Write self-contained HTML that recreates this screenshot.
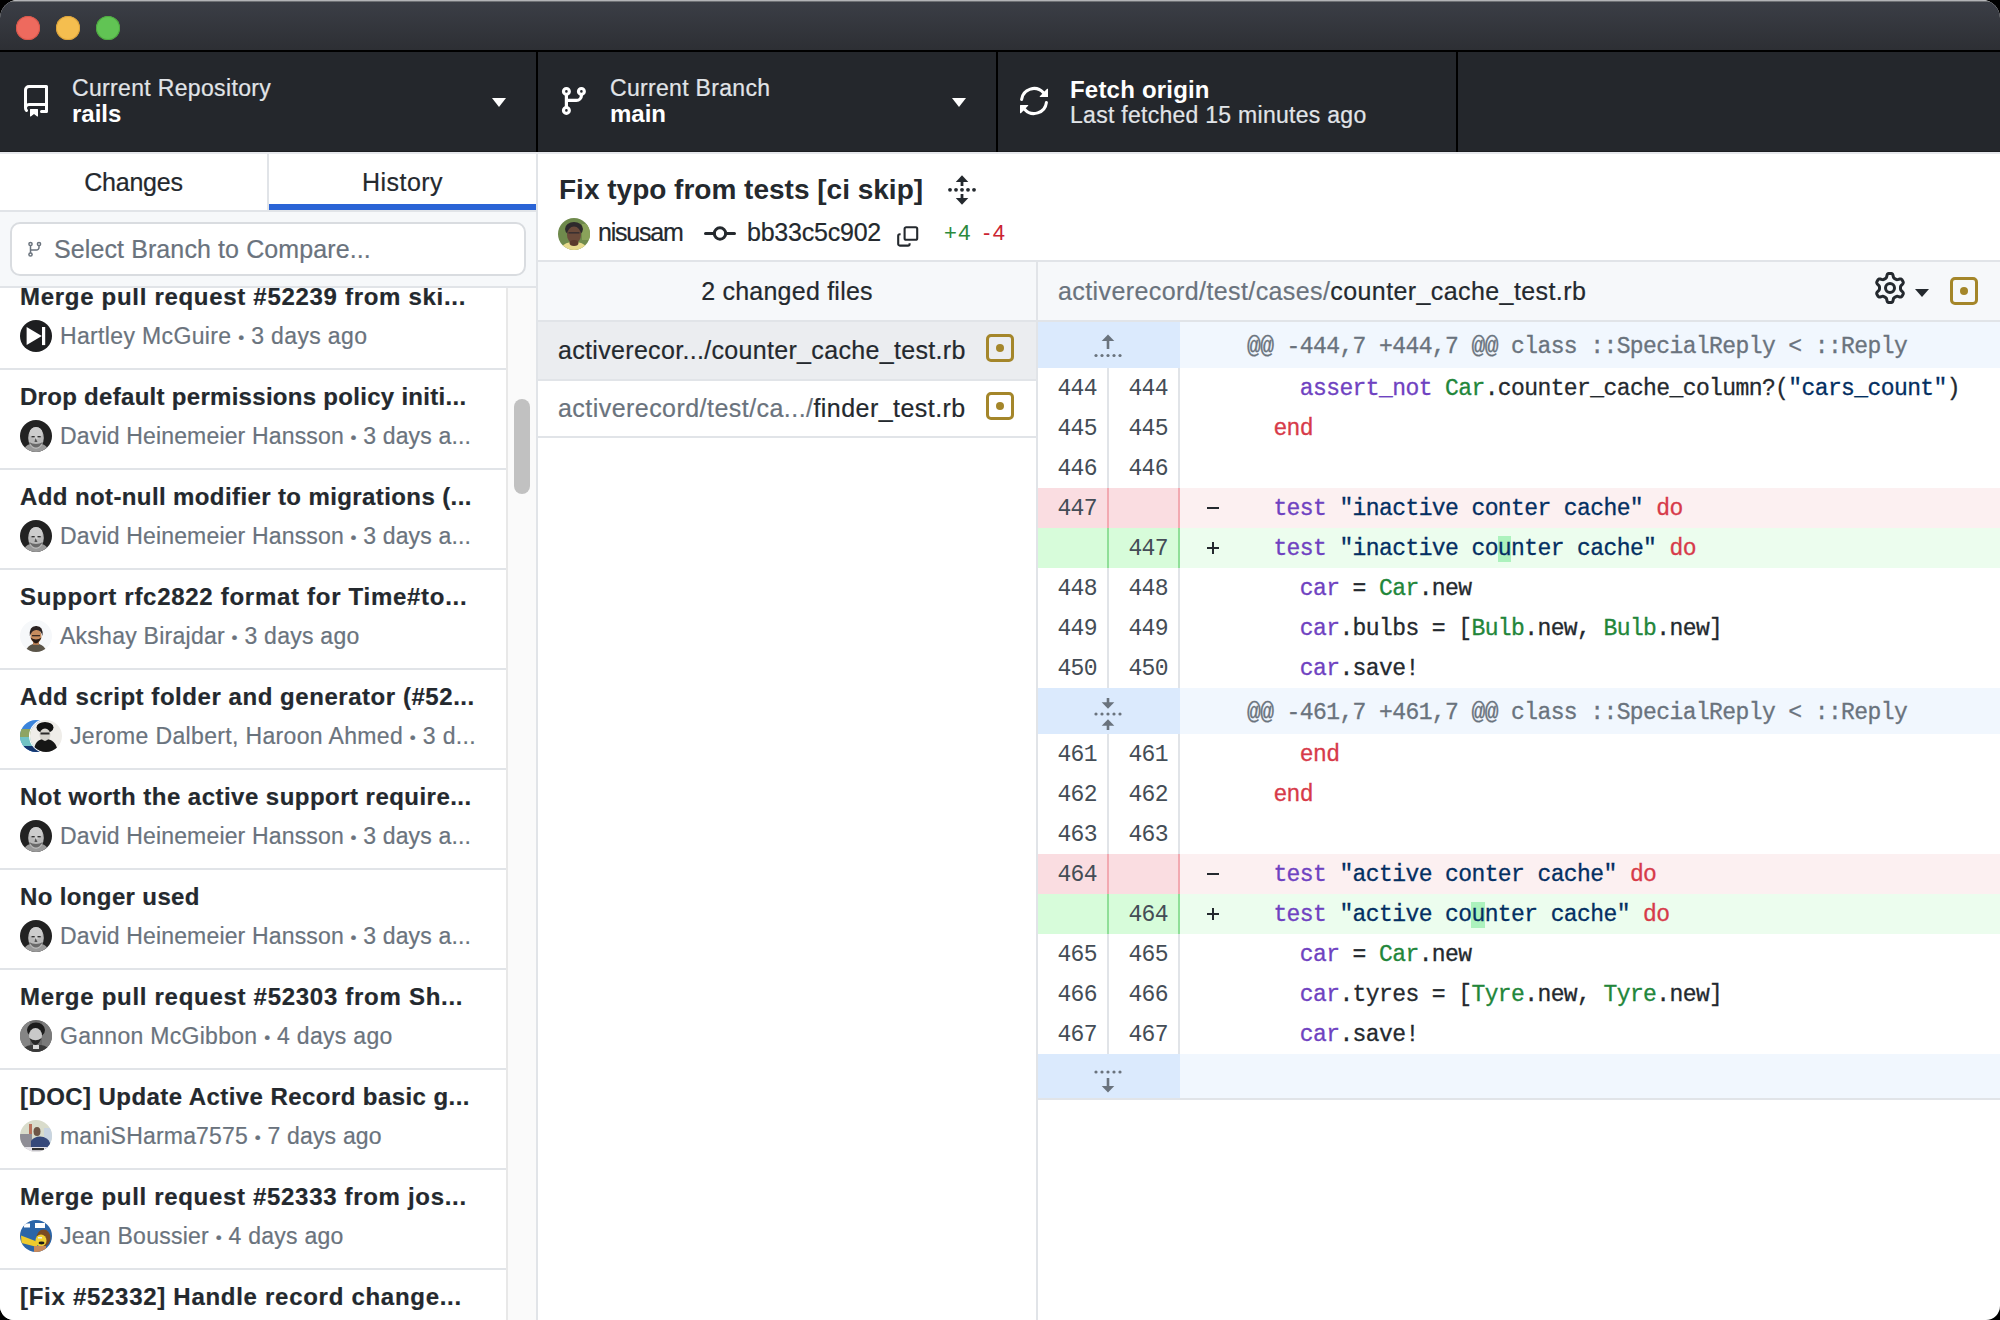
<!DOCTYPE html>
<html><head><meta charset="utf-8">
<style>
*{margin:0;padding:0;box-sizing:border-box}
html,body{width:2000px;height:1320px;overflow:hidden;background:#000}
body{font-family:"Liberation Sans",sans-serif;position:relative}
.a{position:absolute;white-space:nowrap}
#win{position:absolute;left:0;top:0;width:2000px;height:1320px;background:#fff;border-radius:18px 18px 14px 14px;overflow:hidden}
#title{position:absolute;left:0;top:0;width:2000px;height:50px;background:linear-gradient(#b2b3b6 0,#b2b3b6 1px,#6e7074 1px,#6e7074 2px,#3b3e46 2px,#2d2f34 50px)}
.tl{position:absolute;top:16px;width:24px;height:24px;border-radius:50%}
#tbline{position:absolute;left:0;top:50px;width:2000px;height:2px;background:#000}
#toolbar{position:absolute;left:0;top:52px;width:2000px;height:100px;background:#24272c}
.vdiv{position:absolute;top:52px;width:2px;height:100px;background:#000}
.tlab{font-size:22px;color:#e1e4e8;-webkit-text-stroke:0.2px currentColor}
.tval{font-size:24px;font-weight:bold;color:#fff}
.caret{position:absolute;width:0;height:0;border-left:7.5px solid transparent;border-right:7.5px solid transparent;border-top:9px solid #fff}
.t24{font-size:24px;color:#24292e;-webkit-text-stroke:0.2px currentColor}
.bold{font-weight:bold}
.gray{color:#6a737d;-webkit-text-stroke:0.2px currentColor}
.bul{font-size:17px;position:relative;top:-1px}
.sep{position:absolute;left:0;width:506px;height:2px;background:#e1e4e8}
.av{position:absolute;width:32px;height:32px;border-radius:50%;overflow:hidden}
.mono{font-family:"Liberation Mono",monospace;font-size:23px;letter-spacing:-0.6px;white-space:pre;-webkit-text-stroke:0.3px currentColor}
.row{position:absolute;left:1038px;width:962px;height:40px}
.g1{position:absolute;left:0;top:0;width:69px;height:100%;}
.g2{position:absolute;left:71px;top:0;width:69px;height:100%;}
.ln{position:absolute;right:11px;font-family:"Liberation Mono",monospace;font-size:23px;letter-spacing:-0.6px;color:#444d56;top:0;line-height:40px}
.kw{color:#d73a49}.fn{color:#6f42c1}.cl{color:#22863a}.st{color:#032f62}.tx{color:#24292e}
</style></head><body>
<div id="win">
  <div id="title">
    <div class="tl" style="left:16px;top:16px;background:#ee6a5e;box-shadow:inset 0 0 0 1px #d9574b;"></div>
    <div class="tl" style="left:56px;top:16px;background:#f5be4f;box-shadow:inset 0 0 0 1px #dca33a;"></div>
    <div class="tl" style="left:96px;top:16px;background:#61c454;box-shadow:inset 0 0 0 1px #4ea940;"></div>
  </div>
  <div id="tbline"></div>
  <div id="toolbar"></div><div class="a" style="left:0;top:151px;width:2000px;height:1px;background:#1b1d21"></div><div class="a" style="left:0;top:152px;width:2000px;height:2px;background:#e6e8ec;z-index:1"></div>
  <div class="vdiv" style="left:536px"></div>
  <div class="vdiv" style="left:996px"></div>
  <div class="vdiv" style="left:1456px"></div>

  <!-- repo icon -->
  <svg class="a" style="left:24px;top:85px" width="24" height="32" viewBox="2 0 12 16"><path fill="#fff" d="M2 2.5A2.5 2.5 0 0 1 4.5 0h8.75a.75.75 0 0 1 .75.75v12.5a.75.75 0 0 1-.75.75h-2.5a.75.75 0 0 1 0-1.5h1.75v-2h-8a1 1 0 0 0-.714 1.7.75.75 0 1 1-1.072 1.05A2.495 2.495 0 0 1 2 11.5Zm10.5-1h-8a1 1 0 0 0-1 1v6.708A2.486 2.486 0 0 1 4.5 9h8ZM5 12.25a.25.25 0 0 1 .25-.25h3.5a.25.25 0 0 1 .25.25v3.25a.25.25 0 0 1-.4.2l-1.45-1.087a.249.249 0 0 0-.3 0L5.4 15.7a.25.25 0 0 1-.4-.2Z"/></svg>
  <div id="t_repo" class="a tlab" style="left:72px;top:75px;font-size:23px;letter-spacing:0.338px">Current Repository</div>
  <div class="a tval" style="left:72px;top:100px">rails</div>
  <div class="caret" style="left:492px;top:98px"></div>
  <!-- branch icon -->
  <svg class="a" style="left:558px;top:83px" width="32" height="32" viewBox="0 0 32 32"><g fill="none" stroke="#fff" stroke-width="3.2"><circle cx="8.4" cy="8.4" r="2.9"/><circle cx="23.4" cy="8.4" r="2.9"/><circle cx="8.4" cy="27.4" r="2.9"/><path d="M8.4 11.3V24.5M8.4 17.4H18.4a5 5 0 0 0 5-5V11.3"/></g></svg>
  <div id="t_branch" class="a tlab" style="left:610px;top:75px;font-size:23px;letter-spacing:0.316px">Current Branch</div>
  <div class="a tval" style="left:610px;top:100px">main</div>
  <div class="caret" style="left:952px;top:98px"></div>
  <!-- sync icon -->
  <svg class="a" style="left:1018px;top:85px;transform:scaleX(-1)" width="32" height="32" viewBox="0 0 16 16"><path fill="#fff" d="M1.705 8.005a.75.75 0 0 1 .834.656 5.5 5.5 0 0 0 9.592 2.97l-1.204-1.204a.25.25 0 0 1 .177-.427h3.646a.25.25 0 0 1 .25.25v3.646a.25.25 0 0 1-.427.177l-1.38-1.38A7.002 7.002 0 0 1 1.05 8.84a.75.75 0 0 1 .656-.834ZM8 2.5a5.487 5.487 0 0 0-4.131 1.869l1.204 1.204A.25.25 0 0 1 4.896 6H1.25A.25.25 0 0 1 1 5.75V2.104a.25.25 0 0 1 .427-.177l1.38 1.38A7.002 7.002 0 0 1 14.95 7.16a.75.75 0 0 1-1.49.178A5.5 5.5 0 0 0 8 2.5Z"/></svg>
  <div class="a tval" style="left:1070px;top:76px;letter-spacing:0.2px">Fetch origin</div>
  <div id="t_last" class="a tlab" style="left:1070px;top:102px;font-size:23px;letter-spacing:0.277px">Last fetched 15 minutes ago</div>
  <!-- SECTION TOOLBAR -->

  <!-- tabs -->
  <div class="a" style="left:0;top:152px;width:536px;height:58px;background:#fff"></div>
  <div class="a" style="left:267px;top:152px;width:2px;height:58px;background:#e1e4e8"></div>
  <div id="t_changes" class="a t24" style="left:0;top:168px;width:267px;text-align:center;font-size:25px;letter-spacing:-0.200px">Changes</div>
  <div id="t_history" class="a t24" style="left:269px;top:168px;width:267px;text-align:center;font-size:25px;letter-spacing:0.467px">History</div>
  <div class="a" style="left:269px;top:204px;width:267px;height:6px;background:#2a64d6"></div>
  <div class="a" style="left:0;top:210px;width:536px;height:2px;background:#e1e4e8"></div>
  <!-- filter -->
  <div class="a" style="left:0;top:212px;width:536px;height:74px;background:#f6f8fa"></div>
  <div class="a" style="left:0;top:286px;width:536px;height:2px;background:#e1e4e8"></div>
  <div class="a" style="left:10px;top:222px;width:516px;height:54px;background:#fff;border:2px solid #d9dce0;border-radius:10px"></div>
  <svg class="a" style="left:26px;top:241px" width="16" height="16" viewBox="0 0 16 16"><g fill="none" stroke="#6a737d" stroke-width="1.5"><circle cx="4.5" cy="3" r="1.6"/><circle cx="13" cy="3" r="1.6"/><circle cx="4.5" cy="13.5" r="1.6"/><path d="M4.5 4.6V11.9M4.5 9H10.5a2.5 2.5 0 0 0 2.5-2.5V4.6"/></g></svg>
  <div id="t_select" class="a t24 gray" style="left:54px;top:235px;font-size:25px;letter-spacing:0.104px">Select Branch to Compare...</div>
  <!-- commit list -->
  <div class="a" id="clist" style="left:0;top:288px;width:506px;height:1032px;overflow:hidden;background:#fff">
    <div id="ct0" class="a t24 bold" style="left:20px;top:-5px;letter-spacing:0.700px">Merge pull request #52239 from ski...</div>
    <div class="av" style="left:20px;top:32px"><svg width="32" height="32" viewBox="0 0 32 32"><rect width="32" height="32" fill="#1d1e20"/><path fill="#fff" d="M6.6 7L21.8 16L6.6 25.1Z"/><rect x="22" y="7" width="3.2" height="18.1" fill="#fff"/></svg></div>
    <div id="au0" class="a gray" style="left:60px;top:35px;font-size:23px;letter-spacing:0.352px">Hartley McGuire <span class="bul">•</span> 3 days ago</div>
    <div class="sep" style="top:80px"></div>
    <div id="ct1" class="a t24 bold" style="left:20px;top:95px;letter-spacing:0.292px">Drop default permissions policy initi...</div>
    <div class="av" style="left:20px;top:132px"><svg width="32" height="32" viewBox="0 0 32 32"><rect width="32" height="32" fill="#222"/><path d="M3 32Q5 25 10 24L22 24Q27 25 29 32Z" fill="#9a9a9a"/><ellipse cx="16" cy="18" rx="7.8" ry="11" fill="#b9b9b9"/><ellipse cx="16" cy="13" rx="6.5" ry="6" fill="#cdcdcd"/><rect x="11.5" y="16" width="3.2" height="1.4" fill="#333"/><rect x="17.5" y="16" width="3.2" height="1.4" fill="#333"/><path d="M15.5 18L14.5 22H17.5Z" fill="#555"/><path d="M9 22Q16 33 23 22Q16 26 9 22Z" fill="#6a6a6a"/></svg></div>
    <div id="au1" class="a gray" style="left:60px;top:135px;font-size:23px;letter-spacing:0.165px">David Heinemeier Hansson <span class="bul">•</span> 3 days a...</div>
    <div class="sep" style="top:180px"></div>
    <div id="ct2" class="a t24 bold" style="left:20px;top:195px;letter-spacing:0.395px">Add not-null modifier to migrations (...</div>
    <div class="av" style="left:20px;top:232px"><svg width="32" height="32" viewBox="0 0 32 32"><rect width="32" height="32" fill="#222"/><path d="M3 32Q5 25 10 24L22 24Q27 25 29 32Z" fill="#9a9a9a"/><ellipse cx="16" cy="18" rx="7.8" ry="11" fill="#b9b9b9"/><ellipse cx="16" cy="13" rx="6.5" ry="6" fill="#cdcdcd"/><rect x="11.5" y="16" width="3.2" height="1.4" fill="#333"/><rect x="17.5" y="16" width="3.2" height="1.4" fill="#333"/><path d="M15.5 18L14.5 22H17.5Z" fill="#555"/><path d="M9 22Q16 33 23 22Q16 26 9 22Z" fill="#6a6a6a"/></svg></div>
    <div id="au2" class="a gray" style="left:60px;top:235px;font-size:23px;letter-spacing:0.165px">David Heinemeier Hansson <span class="bul">•</span> 3 days a...</div>
    <div class="sep" style="top:280px"></div>
    <div id="ct3" class="a t24 bold" style="left:20px;top:295px;letter-spacing:0.711px">Support rfc2822 format for Time#to...</div>
    <div class="av" style="left:20px;top:332px"><svg width="32" height="32" viewBox="0 0 32 32"><rect width="32" height="32" fill="#f6f8fa"/><path d="M5 32Q8 25 13 24H19Q24 25 27 32Z" fill="#5b5549"/><rect x="13" y="20" width="6" height="5" fill="#b07a52"/><ellipse cx="16" cy="16" rx="5.5" ry="7" fill="#c68c5e"/><path d="M10.5 17.5Q16 29 21.5 17.5Q16 21.5 10.5 17.5Z" fill="#2a1d17"/><path d="M9.8 16Q9 5.5 16.5 6Q23.5 6 22.5 16Q21 9.5 16 10Q12 10 9.8 16Z" fill="#2a2222"/><rect x="12" y="15" width="8" height="1.3" fill="#3a2a22"/></svg></div>
    <div id="au3" class="a gray" style="left:60px;top:335px;font-size:23px;letter-spacing:0.256px">Akshay Birajdar <span class="bul">•</span> 3 days ago</div>
    <div class="sep" style="top:380px"></div>
    <div id="ct4" class="a t24 bold" style="left:20px;top:395px;letter-spacing:0.548px">Add script folder and generator (#52...</div>
    <div class="av" style="left:20px;top:432px"><svg width="32" height="32" viewBox="0 0 32 32"><rect width="32" height="32" fill="#3a84dc"/><rect y="9" width="32" height="8" fill="#8ea462"/><rect y="17" width="32" height="9" fill="#70c2c4"/><rect y="26" width="32" height="6" fill="#15376f"/></svg></div><div class="av" style="left:30px;top:432px;box-shadow:0 0 0 1px #fff"><svg width="32" height="32" viewBox="0 0 32 32"><rect width="32" height="32" fill="#efede9"/><ellipse cx="15" cy="7.5" rx="8.5" ry="5.5" fill="#111"/><ellipse cx="15" cy="15" rx="5.5" ry="6.5" fill="#d6d4ce"/><rect x="10.5" y="12.5" width="9" height="2" fill="#2a2a2a"/><path d="M4 32Q4 19 15 19Q26 19 28 32Z" fill="#161616"/><path d="M11 18Q15 24 19 18Z" fill="#d6d4ce"/></svg></div>
    <div id="au4" class="a gray" style="left:70px;top:435px;font-size:23px;letter-spacing:0.343px">Jerome Dalbert, Haroon Ahmed <span class="bul">•</span> 3 d...</div>
    <div class="sep" style="top:480px"></div>
    <div id="ct5" class="a t24 bold" style="left:20px;top:495px;letter-spacing:0.468px">Not worth the active support require...</div>
    <div class="av" style="left:20px;top:532px"><svg width="32" height="32" viewBox="0 0 32 32"><rect width="32" height="32" fill="#222"/><path d="M3 32Q5 25 10 24L22 24Q27 25 29 32Z" fill="#9a9a9a"/><ellipse cx="16" cy="18" rx="7.8" ry="11" fill="#b9b9b9"/><ellipse cx="16" cy="13" rx="6.5" ry="6" fill="#cdcdcd"/><rect x="11.5" y="16" width="3.2" height="1.4" fill="#333"/><rect x="17.5" y="16" width="3.2" height="1.4" fill="#333"/><path d="M15.5 18L14.5 22H17.5Z" fill="#555"/><path d="M9 22Q16 33 23 22Q16 26 9 22Z" fill="#6a6a6a"/></svg></div>
    <div id="au5" class="a gray" style="left:60px;top:535px;font-size:23px;letter-spacing:0.165px">David Heinemeier Hansson <span class="bul">•</span> 3 days a...</div>
    <div class="sep" style="top:580px"></div>
    <div id="ct6" class="a t24 bold" style="left:20px;top:595px;letter-spacing:0.369px">No longer used</div>
    <div class="av" style="left:20px;top:632px"><svg width="32" height="32" viewBox="0 0 32 32"><rect width="32" height="32" fill="#222"/><path d="M3 32Q5 25 10 24L22 24Q27 25 29 32Z" fill="#9a9a9a"/><ellipse cx="16" cy="18" rx="7.8" ry="11" fill="#b9b9b9"/><ellipse cx="16" cy="13" rx="6.5" ry="6" fill="#cdcdcd"/><rect x="11.5" y="16" width="3.2" height="1.4" fill="#333"/><rect x="17.5" y="16" width="3.2" height="1.4" fill="#333"/><path d="M15.5 18L14.5 22H17.5Z" fill="#555"/><path d="M9 22Q16 33 23 22Q16 26 9 22Z" fill="#6a6a6a"/></svg></div>
    <div id="au6" class="a gray" style="left:60px;top:635px;font-size:23px;letter-spacing:0.165px">David Heinemeier Hansson <span class="bul">•</span> 3 days a...</div>
    <div class="sep" style="top:680px"></div>
    <div id="ct7" class="a t24 bold" style="left:20px;top:695px;letter-spacing:0.714px">Merge pull request #52303 from Sh...</div>
    <div class="av" style="left:20px;top:732px"><svg width="32" height="32" viewBox="0 0 32 32"><rect width="32" height="32" fill="#6a6a6a"/><rect x="0" width="10" height="32" fill="#858585"/><rect x="22" width="10" height="32" fill="#7a7a7a"/><ellipse cx="16" cy="10" rx="9" ry="7.5" fill="#1c1c1c"/><ellipse cx="15.5" cy="15.5" rx="6.5" ry="7.5" fill="#c9c9c9"/><path d="M9.3 18Q15.5 32 21.7 18Q15.5 22.5 9.3 18Z" fill="#262626"/><path d="M0 32Q4 26 11 25H21Q28 26 32 32Z" fill="#3a3a3a"/><rect x="13" y="25" width="6" height="4" fill="#d8d8d8"/></svg></div>
    <div id="au7" class="a gray" style="left:60px;top:735px;font-size:23px;letter-spacing:0.293px">Gannon McGibbon <span class="bul">•</span> 4 days ago</div>
    <div class="sep" style="top:780px"></div>
    <div id="ct8" class="a t24 bold" style="left:20px;top:795px;letter-spacing:0.433px">[DOC] Update Active Record basic g...</div>
    <div class="av" style="left:20px;top:832px"><svg width="32" height="32" viewBox="0 0 32 32"><rect width="32" height="32" fill="#d9dccb"/><rect x="9" y="4" width="3" height="10" fill="#b8705a"/><rect x="24" y="8" width="8" height="20" fill="#c8d4e0"/><rect x="0" y="14" width="12" height="15" fill="#8f8e96"/><path d="M11 29V21Q14 16.5 20 16.5Q28 17 30 23V29Z" fill="#36497a"/><ellipse cx="17" cy="11.5" rx="3.5" ry="4.5" fill="#6e5646"/><rect x="0" y="27" width="32" height="5" fill="#e4e2e8"/><rect x="12" y="28" width="12" height="2.2" fill="#333"/></svg></div>
    <div id="au8" class="a gray" style="left:60px;top:835px;font-size:23px;letter-spacing:0.192px">maniSHarma7575 <span class="bul">•</span> 7 days ago</div>
    <div class="sep" style="top:880px"></div>
    <div id="ct9" class="a t24 bold" style="left:20px;top:895px;letter-spacing:0.683px">Merge pull request #52333 from jos...</div>
    <div class="av" style="left:20px;top:932px"><svg width="32" height="32" viewBox="0 0 32 32"><rect width="32" height="32" fill="#2b65a8"/><rect x="4" y="3.5" width="6" height="4" fill="#fff"/><rect x="15" y="3" width="10" height="5" fill="#fff"/><ellipse cx="23.5" cy="18" rx="7" ry="8.5" fill="#7a4a22"/><ellipse cx="21" cy="20.5" rx="5.5" ry="6" fill="#f1d033"/><path d="M1 15.5L18 22L17 27L1.5 23Z" fill="#efcb2e"/><rect x="14" y="26" width="12" height="6" fill="#c98a5a"/><ellipse cx="21.5" cy="23" rx="3" ry="1.4" fill="#1a1a1a"/><rect x="18" y="17" width="4" height="1.5" fill="#eee"/></svg></div>
    <div id="au9" class="a gray" style="left:60px;top:935px;font-size:23px;letter-spacing:0.252px">Jean Boussier <span class="bul">•</span> 4 days ago</div>
    <div class="sep" style="top:980px"></div>
    <div id="ct10" class="a t24 bold" style="left:20px;top:995px;letter-spacing:0.714px">[Fix #52332] Handle record change...</div>
    <div class="sep" style="top:1080px"></div>
  </div>
  <!-- scrollbar -->
  <div class="a" style="left:506px;top:288px;width:30px;height:1032px;background:#fafafa;border-left:2px solid #e8e8e8"></div>
  <div class="a" style="left:514px;top:399px;width:16px;height:95px;background:#c1c1c1;border-radius:8px"></div>
  <!-- SECTION SIDEBAR -->

  <div class="a" style="left:536px;top:152px;width:2px;height:1168px;background:#e1e4e8"></div>
  <!-- commit header -->
  <div class="a" style="left:538px;top:260px;width:1462px;height:2px;background:#e1e4e8"></div>
  <div class="a bold" style="left:559px;top:174px;font-size:28px;color:#24292e">Fix typo from tests [ci skip]</div>
  <svg class="a" style="left:948px;top:175px" width="28" height="30" viewBox="0 0 28 30"><g fill="#24292e"><path d="M7.8 7H20.3L14 0.2Z"/><rect x="12.6" y="6" width="2.8" height="5"/><rect x="12.6" y="19" width="2.8" height="5"/><path d="M7.8 23H20.3L14 29.8Z"/><circle cx="2" cy="14.8" r="1.9"/><circle cx="8" cy="14.8" r="1.9"/><circle cx="14" cy="14.8" r="1.9"/><circle cx="20" cy="14.8" r="1.9"/><circle cx="26" cy="14.8" r="1.9"/></g></svg>
  <div class="av" style="left:558px;top:218px"><svg width="32" height="32" viewBox="0 0 32 32"><rect width="32" height="32" fill="#6f8a4c"/><rect x="24" y="6" width="8" height="16" fill="#8aa25a"/><ellipse cx="16" cy="11" rx="9" ry="7" fill="#2e2a2c"/><ellipse cx="16" cy="17" rx="7" ry="8.5" fill="#6a4a3a"/><rect x="10.5" y="14" width="11" height="1.6" fill="#3a3030"/><path d="M2 32Q5 25 11 24.5H21Q27 25 30 32Z" fill="#e6da8c"/><ellipse cx="16" cy="25" rx="4.5" ry="3" fill="#5a3a2c"/></svg></div>
  <div id="t_nisusam" class="a t24" style="left:598px;top:218px;font-size:25px;letter-spacing:-1.200px">nisusam</div>
  <svg class="a" style="left:704px;top:218px" width="32" height="32" viewBox="0 0 32 32"><g fill="none" stroke="#24292e" stroke-width="3"><circle cx="16" cy="15.5" r="5.7"/><path d="M1.5 15.5H10.3M21.7 15.5H30.5" stroke-linecap="round"/></g></svg>
  <div id="t_sha" class="a t24" style="left:747px;top:218px;font-size:25px;letter-spacing:-0.222px">bb33c5c902</div>
  <svg class="a" style="left:896px;top:224px" width="24" height="24" viewBox="0 0 24 24"><g fill="none" stroke="#24292e" stroke-width="2.1"><rect x="8.6" y="3.2" width="12.6" height="12.6" rx="1.6"/><path d="M4.6 10.2H3.8a1.6 1.6 0 0 0-1.6 1.6V20a1.6 1.6 0 0 0 1.6 1.6H12a1.6 1.6 0 0 0 1.6-1.6v-0.8"/></g></svg>
  <div class="a" style="left:944px;top:220px;font-size:22px;color:#2c8a3c;letter-spacing:1.5px">+4</div>
  <div class="a" style="left:983px;top:220px;font-size:22px;color:#cb2431;letter-spacing:2.5px">-4</div>
  <!-- file list -->
  <div class="a" style="left:538px;top:262px;width:498px;height:58px;background:#f6f8fa"></div>
  <div class="a" style="left:538px;top:320px;width:498px;height:2px;background:#e1e4e8"></div>
  <div id="t_files" class="a t24" style="left:538px;top:277px;width:498px;text-align:center;font-size:25px;letter-spacing:0.229px">2 changed files</div>
  <div class="a" style="left:538px;top:322px;width:498px;height:57px;background:#ebedf0"></div>
  <div class="a" style="left:538px;top:379px;width:498px;height:2px;background:#e1e4e8"></div>
  <div class="a" style="left:538px;top:436px;width:498px;height:2px;background:#e1e4e8"></div>
  <div id="t_f1" class="a t24" style="left:558px;top:336px;font-size:25px;letter-spacing:0.321px">activerecor.../counter_cache_test.rb</div>
  <div id="t_f2" class="a t24" style="left:558px;top:394px;font-size:25px;letter-spacing:0.454px"><span class="gray">activerecord/test/ca.../</span>finder_test.rb</div>
  <svg class="a mod" style="left:986px;top:334px" width="28" height="28" viewBox="0 0 28 28"><rect x="1.5" y="1.5" width="25" height="25" rx="3.5" fill="none" stroke="#a4862a" stroke-width="3"/><circle cx="14" cy="14" r="4" fill="#a4862a"/></svg>
  <svg class="a mod" style="left:986px;top:392px" width="28" height="28" viewBox="0 0 28 28"><rect x="1.5" y="1.5" width="25" height="25" rx="3.5" fill="none" stroke="#a4862a" stroke-width="3"/><circle cx="14" cy="14" r="4" fill="#a4862a"/></svg>
  <div class="a" style="left:1036px;top:262px;width:2px;height:1058px;background:#e1e4e8"></div>
  <!-- diff header -->
  <div class="a" style="left:1038px;top:262px;width:962px;height:58px;background:#f6f8fa"></div>
  <div class="a" style="left:1038px;top:320px;width:962px;height:2px;background:#e1e4e8"></div>
  <div id="t_path" class="a t24" style="left:1058px;top:277px;font-size:25px;letter-spacing:0.405px"><span class="gray">activerecord/test/cases/</span>counter_cache_test.rb</div>
  <svg class="a" style="left:1874px;top:272px" width="32" height="32" viewBox="0 0 16 16"><path fill="#24292e" d="M8 0a8.2 8.2 0 0 1 .701.031C9.444.095 9.99.645 10.16 1.29l.288 1.107c.018.066.079.158.212.224.231.114.454.243.668.386.123.082.233.09.299.071l1.103-.303c.644-.176 1.392.021 1.82.63.27.385.506.792.704 1.218.315.675.111 1.422-.364 1.891l-.814.806c-.049.048-.098.147-.088.294.016.257.016.515 0 .772-.01.147.038.246.088.294l.814.806c.475.469.679 1.216.364 1.891a7.977 7.977 0 0 1-.704 1.217c-.428.61-1.176.807-1.82.63l-1.102-.302c-.067-.019-.177-.011-.3.071a5.909 5.909 0 0 1-.668.386c-.133.066-.194.158-.211.224l-.29 1.106c-.168.646-.715 1.196-1.458 1.26a8.006 8.006 0 0 1-1.402 0c-.743-.064-1.289-.614-1.458-1.26l-.289-1.106c-.018-.066-.079-.158-.212-.224a5.738 5.738 0 0 1-.668-.386c-.123-.082-.233-.09-.299-.071l-1.103.303c-.644.176-1.392-.021-1.82-.63a8.12 8.12 0 0 1-.704-1.218c-.315-.675-.111-1.422.363-1.891l.815-.806c.05-.048.098-.147.088-.294a6.214 6.214 0 0 1 0-.772c.01-.147-.038-.246-.088-.294l-.815-.806C.635 6.045.431 5.298.746 4.623a7.92 7.92 0 0 1 .704-1.217c.428-.61 1.176-.807 1.82-.63l1.102.302c.067.019.177.011.3-.071.214-.143.437-.272.668-.386.133-.066.194-.158.211-.224l.29-1.106C6.009.645 6.556.095 7.299.03 7.53.01 7.764 0 8 0Zm-.571 1.525c-.036.003-.108.036-.137.146l-.289 1.105c-.147.561-.549.967-.998 1.189-.173.086-.34.183-.5.29-.417.278-.97.423-1.529.27l-1.103-.303c-.109-.03-.175.016-.195.045-.22.312-.412.644-.573.99-.014.031-.021.11.059.19l.815.806c.411.406.562.957.53 1.456a4.709 4.709 0 0 0 0 .582c.032.499-.119 1.05-.53 1.456l-.815.806c-.081.08-.073.159-.059.19.162.346.353.677.573.989.02.03.085.076.195.046l1.102-.303c.56-.153 1.113-.008 1.53.27.161.107.328.204.501.29.447.222.85.629.997 1.189l.289 1.105c.029.109.101.143.137.146a6.6 6.6 0 0 0 1.142 0c.036-.003.108-.036.137-.146l.289-1.105c.147-.561.549-.967.998-1.189.173-.086.34-.183.5-.29.417-.278.97-.423 1.529-.27l1.103.303c.109.029.175-.016.195-.045.22-.313.411-.644.573-.99.014-.031.021-.11-.059-.19l-.815-.806c-.411-.406-.562-.957-.53-1.456a4.709 4.709 0 0 0 0-.582c-.032-.499.119-1.05.53-1.456l.815-.806c.081-.08.073-.159.059-.19a6.464 6.464 0 0 0-.573-.989c-.02-.03-.085-.076-.195-.046l-1.102.303c-.56.153-1.113.008-1.53-.27a4.44 4.44 0 0 0-.501-.29c-.447-.222-.85-.629-.997-1.189l-.289-1.105c-.029-.11-.101-.143-.137-.146a6.6 6.6 0 0 0-1.142 0ZM11 8a3 3 0 1 1-6 0 3 3 0 0 1 6 0ZM9.5 8a1.5 1.5 0 1 0-3.001.001A1.5 1.5 0 0 0 9.5 8Z"/></svg>
  <div class="caret" style="left:1915px;top:289px;border-top-color:#24292e;border-width:8px 7.2px 0 7.2px"></div>
  <svg class="a" style="left:1950px;top:277px" width="28" height="28" viewBox="0 0 28 28"><rect x="1.5" y="1.5" width="25" height="25" rx="3.5" fill="none" stroke="#a4862a" stroke-width="3"/><circle cx="14" cy="14" r="4" fill="#a4862a"/></svg>
  <!-- DIFF -->
  <div class="a" style="left:1038px;top:322px;width:142px;height:46px;background:#dbeafd"></div><div class="a" style="left:1180px;top:322px;width:820px;height:46px;background:#f1f7fe"></div>
  <svg class="a" style="left:1094px;top:334px" width="28" height="24" viewBox="0 0 28 24"><g fill="#6a737d"><path d="M7.7 7H20.3L14 0.6Z"/><rect x="12.7" y="6" width="2.6" height="9"/><circle cx="2" cy="21.5" r="1.6"/><circle cx="8" cy="21.5" r="1.6"/><circle cx="14" cy="21.5" r="1.6"/><circle cx="20" cy="21.5" r="1.6"/><circle cx="26" cy="21.5" r="1.6"/></g></svg>
  <div class="a mono" style="left:1247px;top:327px;line-height:40px;color:#6a737d">@@ -444,7 +444,7 @@ class ::SpecialReply &lt; ::Reply</div>
  <div class="a" style="left:1107px;top:368px;width:2px;height:40px;background:#e1e4e8"></div><div class="a" style="left:1178px;top:368px;width:2px;height:40px;background:#e1e4e8"></div>
  <div class="a ln" style="left:1038px;top:369px;width:59px;text-align:right">444</div><div class="a ln" style="left:1109px;top:369px;width:59px;text-align:right">444</div>
  <div class="a mono tx" style="left:1247px;top:369px;line-height:40px">    <span class="fn">assert_not</span> <span class="cl">Car</span>.counter_cache_column?(<span class="st">"cars_count"</span>)</div>
  <div class="a" style="left:1107px;top:408px;width:2px;height:40px;background:#e1e4e8"></div><div class="a" style="left:1178px;top:408px;width:2px;height:40px;background:#e1e4e8"></div>
  <div class="a ln" style="left:1038px;top:409px;width:59px;text-align:right">445</div><div class="a ln" style="left:1109px;top:409px;width:59px;text-align:right">445</div>
  <div class="a mono tx" style="left:1247px;top:409px;line-height:40px">  <span class="kw">end</span></div>
  <div class="a" style="left:1107px;top:448px;width:2px;height:40px;background:#e1e4e8"></div><div class="a" style="left:1178px;top:448px;width:2px;height:40px;background:#e1e4e8"></div>
  <div class="a ln" style="left:1038px;top:449px;width:59px;text-align:right">446</div><div class="a ln" style="left:1109px;top:449px;width:59px;text-align:right">446</div>
  <div class="a mono tx" style="left:1247px;top:449px;line-height:40px"></div>
  <div class="a" style="left:1038px;top:488px;width:142px;height:40px;background:#fadde1"></div><div class="a" style="left:1180px;top:488px;width:820px;height:40px;background:#fcf0f1"></div>
  <div class="a" style="left:1107px;top:488px;width:2px;height:40px;background:#f2a9b1"></div><div class="a" style="left:1178px;top:488px;width:2px;height:40px;background:#f2a9b1"></div>
  <div class="a ln" style="left:1038px;top:489px;width:59px;text-align:right">447</div>
  <div class="a" style="left:1207px;top:507px;width:12px;height:2px;background:#24292e"></div>
  <div class="a mono tx" style="left:1247px;top:489px;line-height:40px">  <span class="fn">test</span> <span class="st">"inactive conter cache"</span> <span class="kw">do</span></div>
  <div class="a" style="left:1038px;top:528px;width:142px;height:40px;background:#d7fcda"></div><div class="a" style="left:1180px;top:528px;width:820px;height:40px;background:#ecfdee"></div>
  <div class="a" style="left:1107px;top:528px;width:2px;height:40px;background:#8fdf98"></div><div class="a" style="left:1178px;top:528px;width:2px;height:40px;background:#8fdf98"></div>
  <div class="a ln" style="left:1109px;top:529px;width:59px;text-align:right">447</div>
  <div class="a" style="left:1207px;top:547px;width:12px;height:2px;background:#24292e"></div><div class="a" style="left:1212px;top:542px;width:2px;height:12px;background:#24292e"></div>
  <div class="a mono tx" style="left:1247px;top:529px;line-height:40px">  <span class="fn">test</span> <span class="st">"inactive co<span style="background:#acf2bd">u</span>nter cache"</span> <span class="kw">do</span></div>
  <div class="a" style="left:1107px;top:568px;width:2px;height:40px;background:#e1e4e8"></div><div class="a" style="left:1178px;top:568px;width:2px;height:40px;background:#e1e4e8"></div>
  <div class="a ln" style="left:1038px;top:569px;width:59px;text-align:right">448</div><div class="a ln" style="left:1109px;top:569px;width:59px;text-align:right">448</div>
  <div class="a mono tx" style="left:1247px;top:569px;line-height:40px">    <span class="fn">car</span> = <span class="cl">Car</span>.new</div>
  <div class="a" style="left:1107px;top:608px;width:2px;height:40px;background:#e1e4e8"></div><div class="a" style="left:1178px;top:608px;width:2px;height:40px;background:#e1e4e8"></div>
  <div class="a ln" style="left:1038px;top:609px;width:59px;text-align:right">449</div><div class="a ln" style="left:1109px;top:609px;width:59px;text-align:right">449</div>
  <div class="a mono tx" style="left:1247px;top:609px;line-height:40px">    <span class="fn">car</span>.bulbs = [<span class="cl">Bulb</span>.new, <span class="cl">Bulb</span>.new]</div>
  <div class="a" style="left:1107px;top:648px;width:2px;height:40px;background:#e1e4e8"></div><div class="a" style="left:1178px;top:648px;width:2px;height:40px;background:#e1e4e8"></div>
  <div class="a ln" style="left:1038px;top:649px;width:59px;text-align:right">450</div><div class="a ln" style="left:1109px;top:649px;width:59px;text-align:right">450</div>
  <div class="a mono tx" style="left:1247px;top:649px;line-height:40px">    <span class="fn">car</span>.save!</div>
  <div class="a" style="left:1038px;top:688px;width:142px;height:46px;background:#dbeafd"></div><div class="a" style="left:1180px;top:688px;width:820px;height:46px;background:#f1f7fe"></div>
  <svg class="a" style="left:1094px;top:697px" width="28" height="34" viewBox="0 0 28 34"><g fill="#6a737d"><rect x="12.7" y="1" width="2.6" height="5"/><path d="M7.7 5.2H20.3L14 11.8Z"/><circle cx="2" cy="17" r="1.6"/><circle cx="8" cy="17" r="1.6"/><circle cx="14" cy="17" r="1.6"/><circle cx="20" cy="17" r="1.6"/><circle cx="26" cy="17" r="1.6"/><path d="M7.7 28.8H20.3L14 22.2Z"/><rect x="12.7" y="28" width="2.6" height="5"/></g></svg>
  <div class="a mono" style="left:1247px;top:693px;line-height:40px;color:#6a737d">@@ -461,7 +461,7 @@ class ::SpecialReply &lt; ::Reply</div>
  <div class="a" style="left:1107px;top:734px;width:2px;height:40px;background:#e1e4e8"></div><div class="a" style="left:1178px;top:734px;width:2px;height:40px;background:#e1e4e8"></div>
  <div class="a ln" style="left:1038px;top:735px;width:59px;text-align:right">461</div><div class="a ln" style="left:1109px;top:735px;width:59px;text-align:right">461</div>
  <div class="a mono tx" style="left:1247px;top:735px;line-height:40px">    <span class="kw">end</span></div>
  <div class="a" style="left:1107px;top:774px;width:2px;height:40px;background:#e1e4e8"></div><div class="a" style="left:1178px;top:774px;width:2px;height:40px;background:#e1e4e8"></div>
  <div class="a ln" style="left:1038px;top:775px;width:59px;text-align:right">462</div><div class="a ln" style="left:1109px;top:775px;width:59px;text-align:right">462</div>
  <div class="a mono tx" style="left:1247px;top:775px;line-height:40px">  <span class="kw">end</span></div>
  <div class="a" style="left:1107px;top:814px;width:2px;height:40px;background:#e1e4e8"></div><div class="a" style="left:1178px;top:814px;width:2px;height:40px;background:#e1e4e8"></div>
  <div class="a ln" style="left:1038px;top:815px;width:59px;text-align:right">463</div><div class="a ln" style="left:1109px;top:815px;width:59px;text-align:right">463</div>
  <div class="a mono tx" style="left:1247px;top:815px;line-height:40px"></div>
  <div class="a" style="left:1038px;top:854px;width:142px;height:40px;background:#fadde1"></div><div class="a" style="left:1180px;top:854px;width:820px;height:40px;background:#fcf0f1"></div>
  <div class="a" style="left:1107px;top:854px;width:2px;height:40px;background:#f2a9b1"></div><div class="a" style="left:1178px;top:854px;width:2px;height:40px;background:#f2a9b1"></div>
  <div class="a ln" style="left:1038px;top:855px;width:59px;text-align:right">464</div>
  <div class="a" style="left:1207px;top:873px;width:12px;height:2px;background:#24292e"></div>
  <div class="a mono tx" style="left:1247px;top:855px;line-height:40px">  <span class="fn">test</span> <span class="st">"active conter cache"</span> <span class="kw">do</span></div>
  <div class="a" style="left:1038px;top:894px;width:142px;height:40px;background:#d7fcda"></div><div class="a" style="left:1180px;top:894px;width:820px;height:40px;background:#ecfdee"></div>
  <div class="a" style="left:1107px;top:894px;width:2px;height:40px;background:#8fdf98"></div><div class="a" style="left:1178px;top:894px;width:2px;height:40px;background:#8fdf98"></div>
  <div class="a ln" style="left:1109px;top:895px;width:59px;text-align:right">464</div>
  <div class="a" style="left:1207px;top:913px;width:12px;height:2px;background:#24292e"></div><div class="a" style="left:1212px;top:908px;width:2px;height:12px;background:#24292e"></div>
  <div class="a mono tx" style="left:1247px;top:895px;line-height:40px">  <span class="fn">test</span> <span class="st">"active co<span style="background:#acf2bd">u</span>nter cache"</span> <span class="kw">do</span></div>
  <div class="a" style="left:1107px;top:934px;width:2px;height:40px;background:#e1e4e8"></div><div class="a" style="left:1178px;top:934px;width:2px;height:40px;background:#e1e4e8"></div>
  <div class="a ln" style="left:1038px;top:935px;width:59px;text-align:right">465</div><div class="a ln" style="left:1109px;top:935px;width:59px;text-align:right">465</div>
  <div class="a mono tx" style="left:1247px;top:935px;line-height:40px">    <span class="fn">car</span> = <span class="cl">Car</span>.new</div>
  <div class="a" style="left:1107px;top:974px;width:2px;height:40px;background:#e1e4e8"></div><div class="a" style="left:1178px;top:974px;width:2px;height:40px;background:#e1e4e8"></div>
  <div class="a ln" style="left:1038px;top:975px;width:59px;text-align:right">466</div><div class="a ln" style="left:1109px;top:975px;width:59px;text-align:right">466</div>
  <div class="a mono tx" style="left:1247px;top:975px;line-height:40px">    <span class="fn">car</span>.tyres = [<span class="cl">Tyre</span>.new, <span class="cl">Tyre</span>.new]</div>
  <div class="a" style="left:1107px;top:1014px;width:2px;height:40px;background:#e1e4e8"></div><div class="a" style="left:1178px;top:1014px;width:2px;height:40px;background:#e1e4e8"></div>
  <div class="a ln" style="left:1038px;top:1015px;width:59px;text-align:right">467</div><div class="a ln" style="left:1109px;top:1015px;width:59px;text-align:right">467</div>
  <div class="a mono tx" style="left:1247px;top:1015px;line-height:40px">    <span class="fn">car</span>.save!</div>
  <div class="a" style="left:1038px;top:1054px;width:142px;height:44px;background:#dbeafd"></div><div class="a" style="left:1180px;top:1054px;width:820px;height:44px;background:#f1f7fe"></div>
  <svg class="a" style="left:1094px;top:1068px" width="28" height="26" viewBox="0 0 28 26"><g fill="#6a737d"><circle cx="2" cy="4" r="1.6"/><circle cx="8" cy="4" r="1.6"/><circle cx="14" cy="4" r="1.6"/><circle cx="20" cy="4" r="1.6"/><circle cx="26" cy="4" r="1.6"/><rect x="12.7" y="10" width="2.6" height="9"/><path d="M7.7 18H20.3L14 24.4Z"/></g></svg>
  <div class="a" style="left:1038px;top:1098px;width:962px;height:2px;background:#e1e4e8"></div>

  <!-- SECTION MAIN -->
</div>
</body></html>
